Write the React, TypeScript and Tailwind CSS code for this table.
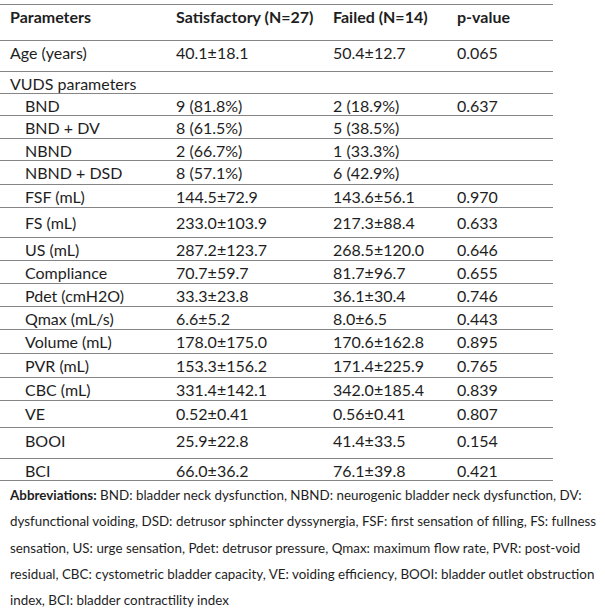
const rows: { label: string; sat: string; fail: string; p: string; indent?: boolean; h: string; shift?: string }[] = [
    { label: "Age (years)", sat: "40.1±18.1", fail: "50.4±12.7", p: "0.065", h: "h-[31px]", shift: "pb-[7px]" },
    { label: "VUDS parameters", sat: "", fail: "", p: "", h: "h-[22px]" },
    { label: "BND", sat: "9 (81.8%)", fail: "2 (18.9%)", p: "0.637", indent: true, h: "h-[22px]" },
    { label: "BND + DV", sat: "8 (61.5%)", fail: "5 (38.5%)", p: "", indent: true, h: "h-[23px]" },
    { label: "NBND", sat: "2 (66.7%)", fail: "1 (33.3%)", p: "", indent: true, h: "h-[22px]" },
    { label: "NBND + DSD", sat: "8 (57.1%)", fail: "6 (42.9%)", p: "", indent: true, h: "h-[24px]" },
    { label: "FSF (mL)", sat: "144.5±72.9", fail: "143.6±56.1", p: "0.970", indent: true, h: "h-[23px]" },
    { label: "FS (mL)", sat: "233.0±103.9", fail: "217.3±88.4", p: "0.633", indent: true, h: "h-[30px]" },
    { label: "US (mL)", sat: "287.2±123.7", fail: "268.5±120.0", p: "0.646", indent: true, h: "h-[23px]" },
    { label: "Compliance", sat: "70.7±59.7", fail: "81.7±96.7", p: "0.655", indent: true, h: "h-[23px]" },
    { label: "Pdet (cmH2O)", sat: "33.3±23.8", fail: "36.1±30.4", p: "0.746", indent: true, h: "h-[23px]" },
    { label: "Qmax (mL/s)", sat: "6.6±5.2", fail: "8.0±6.5", p: "0.443", indent: true, h: "h-[23px]" },
    { label: "Volume (mL)", sat: "178.0±175.0", fail: "170.6±162.8", p: "0.895", indent: true, h: "h-[24px]" },
    { label: "PVR (mL)", sat: "153.3±156.2", fail: "171.4±225.9", p: "0.765", indent: true, h: "h-[24px]" },
    { label: "CBC (mL)", sat: "331.4±142.1", fail: "342.0±185.4", p: "0.839", indent: true, h: "h-[23px]" },
    { label: "VE", sat: "0.52±0.41", fail: "0.56±0.41", p: "0.807", indent: true, h: "h-[27px]" },
    { label: "BOOI", sat: "25.9±22.8", fail: "41.4±33.5", p: "0.154", indent: true, h: "h-[31px]", shift: "pb-[4px]" },
    { label: "BCI", sat: "66.0±36.2", fail: "76.1±39.8", p: "0.421", indent: true, h: "h-[22px]" },
]

const App = () => {
    return (
        <div className="w-[605px] h-[613px] bg-white text-[#1e1e1e] font-['Lato',sans-serif] overflow-hidden">
            <div className="w-[553px] mt-[4px] border-t border-[#858585] text-[16px]">
                <div className="grid grid-cols-[166px_157px_124px_1fr] h-[36px] items-center pb-[12px] border-b border-[#858585] font-bold">
                    <div className="pl-[10px]">Parameters</div>
                    <div className="pl-[10px]">Satisfactory (N=27)</div>
                    <div className="pl-[10px]">Failed (N=14)</div>
                    <div className="pl-[10px]">p-value</div>
                </div>
                {rows.map((r) => (
                    <div key={r.label} className={`grid grid-cols-[166px_157px_124px_1fr] items-center border-b border-[#858585] ${r.h} ${r.shift ?? ""}`}>
                        <div className={r.indent ? "pl-[25px]" : "pl-[10px]"}>{r.label}</div>
                        <div className="pl-[10px]">{r.sat}</div>
                        <div className="pl-[10px]">{r.fail}</div>
                        <div className="pl-[10px]">{r.p}</div>
                    </div>
                ))}
            </div>
            <div className="pl-[10px] pt-[1px] text-[13.4px] leading-[26.3px] whitespace-nowrap">
                <div><strong>Abbreviations:</strong> BND: bladder neck dysfunction, NBND: neurogenic bladder neck dysfunction, DV:</div>
                <div>dysfunctional voiding, DSD: detrusor sphincter dyssynergia, FSF: first sensation of filling, FS: fullness</div>
                <div>sensation, US: urge sensation, Pdet: detrusor pressure, Qmax: maximum flow rate, PVR: post-void</div>
                <div>residual, CBC: cystometric bladder capacity, VE: voiding efficiency, BOOI: bladder outlet obstruction</div>
                <div>index, BCI: bladder contractility index</div>
            </div>
        </div>
    )
}

export default App
